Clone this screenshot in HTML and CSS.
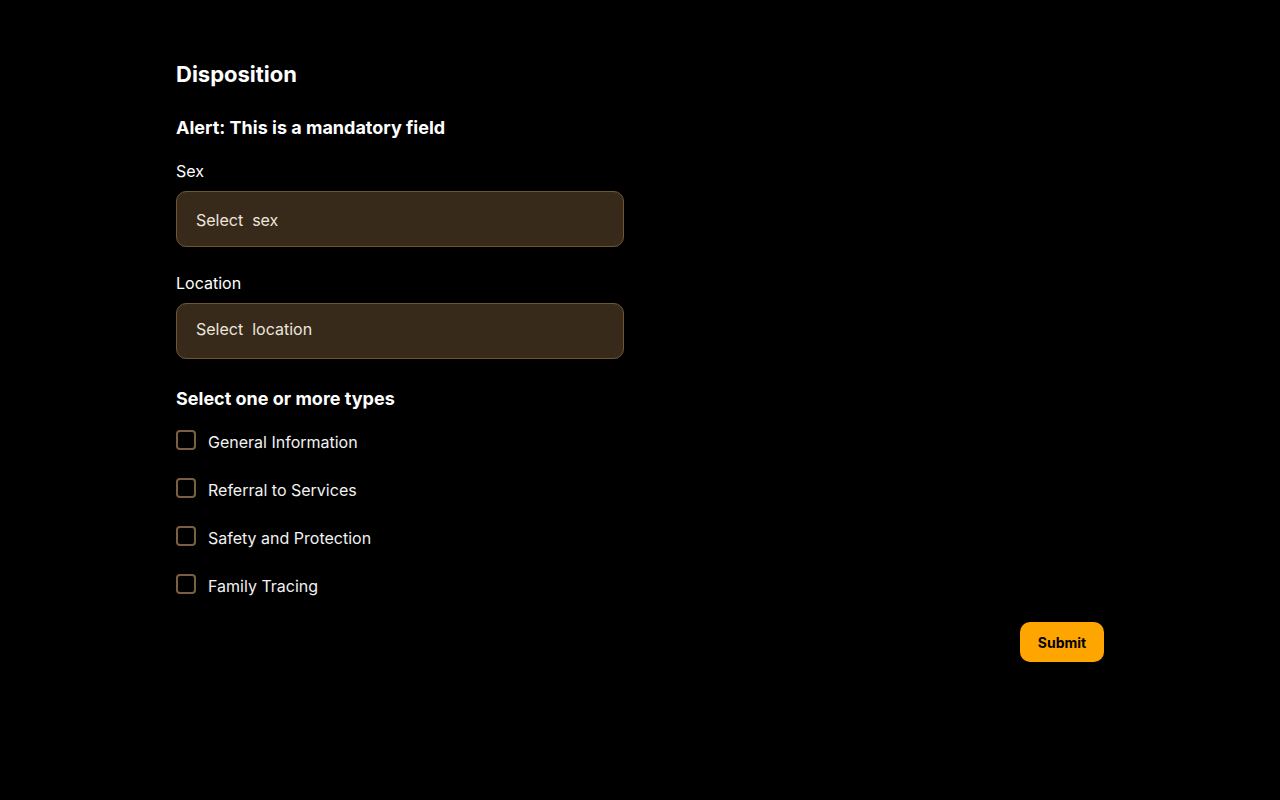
FILE: index.html
```html
<!DOCTYPE html>
<html lang="en">
<head>
<meta charset="utf-8">
<title>Disposition</title>
<link rel="stylesheet" href="styles.css">
</head>
<body>
<main class="page">
  <h1 class="title">Disposition</h1>
  <h2 class="alert">Alert: This is a mandatory field</h2>
  <div class="field">
    <label class="label">Sex</label>
    <div class="select">Select&nbsp; sex</div>
  </div>
  <div class="field">
    <label class="label">Location</label>
    <div class="select select-raised">Select&nbsp; location</div>
  </div>
  <h2 class="types-title">Select one or more types</h2>
  <ul class="checks">
    <li class="check"><span class="box"></span><span class="check-text">General Information</span></li>
    <li class="check"><span class="box"></span><span class="check-text">Referral to Services</span></li>
    <li class="check"><span class="box"></span><span class="check-text">Safety and Protection</span></li>
    <li class="check"><span class="box"></span><span class="check-text">Family Tracing</span></li>
  </ul>
  <div class="actions">
    <button class="submit">Submit</button>
  </div>
</main>
</body>
</html>
```

FILE: styles.css
```css
html, body {
  margin: 0;
  padding: 0;
  background: #000;
  color: #fff;
  font-family: Inter, "Noto Sans", sans-serif;
}
.page {
  width: 928px;
  margin-left: 176px;
  padding-top: 60px;
}
.title {
  margin: 0;
  font-size: 22px;
  line-height: 28px;
  font-weight: 700;
}
.alert {
  margin: 28px 0 0;
  font-size: 18px;
  line-height: 24px;
  font-weight: 700;
}
.field {
  margin-top: 21px;
  display: flex;
  flex-direction: column;
  gap: 10px;
}
.field + .field {
  margin-top: 26px;
}
.label {
  font-size: 16px;
  line-height: 20px;
  color: #fff;
}
.select {
  width: 448px;
  height: 56px;
  box-sizing: border-box;
  background: #382a1b;
  border: 1px solid #6e5632;
  border-radius: 10px;
  padding: 2px 19px 0;
  display: flex;
  align-items: center;
  font-size: 16px;
  color: #ece6dc;
}
.select-raised {
  padding-top: 0;
  padding-bottom: 4px;
}
.types-title {
  margin: 28px 0 0;
  font-size: 18px;
  line-height: 24px;
  font-weight: 700;
}
.checks {
  list-style: none;
  margin: 19px 0 0;
  padding: 0;
  display: flex;
  flex-direction: column;
  gap: 24px;
}
.check {
  display: flex;
  align-items: center;
  gap: 12px;
  height: 24px;
}
.box {
  width: 20px;
  height: 20px;
  box-sizing: border-box;
  border: 2px solid #7a6040;
  border-radius: 4px;
  margin-top: -4px;
}
.check-text {
  font-size: 16px;
  line-height: 24px;
  color: #f2f2f2;
}
.actions {
  display: flex;
  justify-content: flex-end;
  margin-top: 24px;
}
.submit {
  width: 84px;
  height: 40px;
  border: none;
  border-radius: 10px;
  background: #ffa500;
  color: #000;
  font-family: Inter, "Noto Sans", sans-serif;
  font-size: 14px;
  font-weight: 700;
  cursor: pointer;
}
```
